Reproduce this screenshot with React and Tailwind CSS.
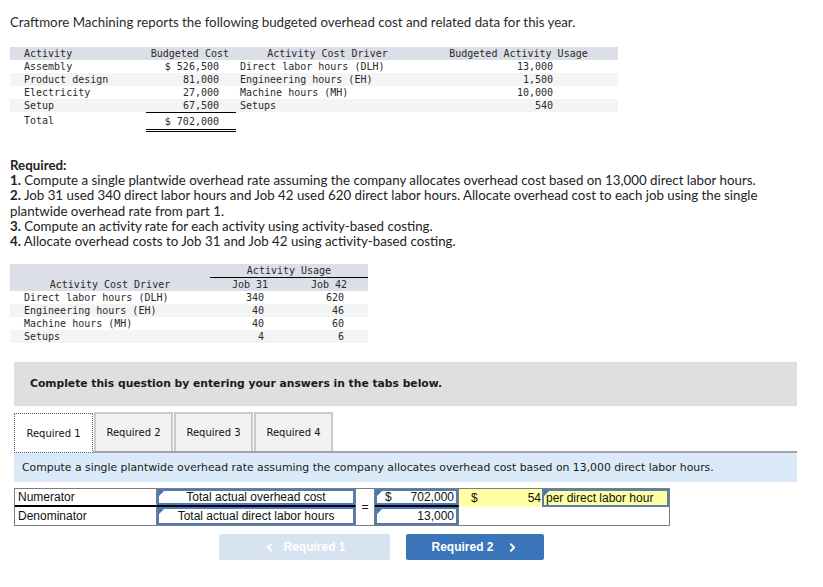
import React from 'react';
import { ChevronLeft, ChevronRight } from 'lucide-react';

const mono = "font-['DejaVu_Sans_Mono',monospace] text-[10px] leading-[13px] text-[#2a2a2a]";

const budget = [
  { activity: 'Assembly', cost: '$ 526,500', driver: 'Direct labor hours (DLH)', usage: '13,000' },
  { activity: 'Product design', cost: '81,000', driver: 'Engineering hours (EH)', usage: '1,500' },
  { activity: 'Electricity', cost: '27,000', driver: 'Machine hours (MH)', usage: '10,000' },
  { activity: 'Setup', cost: '67,500', driver: 'Setups', usage: '540' },
];

const usage = [
  { driver: 'Direct labor hours (DLH)', j31: '340', j42: '620' },
  { driver: 'Engineering hours (EH)', j31: '40', j42: '46' },
  { driver: 'Machine hours (MH)', j31: '40', j42: '60' },
  { driver: 'Setups', j31: '4', j42: '6' },
];

function BudgetTable() {
  return (
    <div className={`ml-[10px] w-[608px] ${mono}`}>
      <div className="grid grid-cols-[130px_96px_183px_199px] bg-[#dcdfe7]">
        <div className="pl-[14px]">Activity</div>
        <div className="text-right pr-[7px]">Budgeted Cost</div>
        <div className="text-center">Activity Cost Driver</div>
        <div className="text-center">Budgeted Activity Usage</div>
      </div>
      {budget.map((r, i) => (
        <div key={r.activity} className={`grid grid-cols-[130px_96px_183px_199px] ${i % 2 ? 'bg-[#f4f4f4]' : 'bg-white'}`}>
          <div className="pl-[14px]">{r.activity}</div>
          <div className="text-right pr-[17px]">{r.cost}</div>
          <div className="pl-[4px]">{r.driver}</div>
          <div className="text-right pr-[65px]">{r.usage}</div>
        </div>
      ))}
      <div className="grid grid-cols-[130px_96px_183px_199px]">
        <div className="pl-[14px] pt-[2px]">Total</div>
        <div className="ml-[6px] border-t border-black pt-[2px] pb-[1px] border-b-[3px] border-b-black border-double text-right pr-[17px]">$ 702,000</div>
        <div />
        <div />
      </div>
    </div>
  );
}

function UsageTable() {
  return (
    <div className={`ml-[10px] w-[358px] ${mono}`}>
      <div className="bg-[#dcdfe7] grid grid-cols-[200px_158px]">
        <div />
        <div className="text-center border-b border-black">Activity Usage</div>
        <div className="text-center">Activity Cost Driver</div>
        <div className="grid grid-cols-[80px_78px]">
          <div className="text-center">Job 31</div>
          <div className="text-center">Job 42</div>
        </div>
      </div>
      {usage.map((r, i) => (
        <div key={r.driver} className={`grid grid-cols-[200px_80px_78px] ${i % 2 ? 'bg-[#f4f4f4]' : 'bg-white'}`}>
          <div className="pl-[14px]">{r.driver}</div>
          <div className="text-right pr-[26px]">{r.j31}</div>
          <div className="text-right pr-[24px]">{r.j42}</div>
        </div>
      ))}
    </div>
  );
}

function Flag() {
  return <span className="absolute left-0 top-0 w-0 h-0 border-t-[5px] border-t-[#3f73b6] border-r-[5px] border-r-transparent" />;
}

function InputBox({ children, className = '' }) {
  return (
    <div className={`relative h-full border-2 border-[#4f7cb8] flex items-center ${className}`}>
      <Flag />
      {children}
    </div>
  );
}

function AnswerTable() {
  const cell = "font-['Liberation_Sans',Arial,sans-serif] text-[12px] text-[#111]";
  return (
    <div className={`ml-[14px] w-[656px] border border-[#7d7d7d] grid grid-cols-[142px_199px_19px_84px_83px_127px] grid-rows-[18px_18px] ${cell}`}>
      <div className="border-r border-[#7d7d7d] border-b-2 border-b-black px-[3px] flex items-center">Numerator</div>
      <div className="border-r border-[#7d7d7d] border-b-2 border-b-black">
        <InputBox className="justify-center bg-white">Total actual overhead cost</InputBox>
      </div>
      <div className="row-span-2 border-r border-[#7d7d7d] flex items-center justify-center">=</div>
      <div className="border-r border-[#7d7d7d] border-b-2 border-b-black">
        <InputBox className="justify-between pl-[8px] pr-[2px]">
          <span>$</span>
          <span>702,000</span>
        </InputBox>
      </div>
      <div className="bg-[#ffffa6] flex items-center justify-between pl-[12px] pr-[1px]">
        <span>$</span>
        <span>54</span>
      </div>
      <div className="bg-[#ffffa6]">
        <InputBox className="px-[2px] border-[#5a7fae]">per direct labor hour</InputBox>
      </div>
      <div className="border-r border-[#7d7d7d] px-[3px] flex items-center">Denominator</div>
      <div className="border-r border-[#7d7d7d]">
        <InputBox className="justify-center bg-white">Total actual direct labor hours</InputBox>
      </div>
      <div className="border-r border-[#7d7d7d]">
        <InputBox className="justify-end pr-[2px]">13,000</InputBox>
      </div>
      <div className="col-span-2 bg-white" />
    </div>
  );
}

export default function App() {
  const tabs = ['Required 1', 'Required 2', 'Required 3', 'Required 4'];
  return (
    <div className="w-[823px] h-[587px] bg-white overflow-hidden font-['Lato','Open_Sans',sans-serif] text-[#2b2b2b]">
      <p className="pl-[10px] pt-[14px] text-[13.3px] leading-[16px]">
        Craftmore Machining reports the following budgeted overhead cost and related data for this year.
      </p>

      <div className="mt-[17px]">
        <BudgetTable />
      </div>

      <div className="mt-[26px] pl-[10px] text-[13.3px] leading-[15.2px] text-[#222] whitespace-nowrap">
        <div className="font-bold">Required:</div>
        <div><b>1.</b> Compute a single plantwide overhead rate assuming the company allocates overhead cost based on 13,000 direct labor hours.</div>
        <div><b>2.</b> Job 31 used 340 direct labor hours and Job 42 used 620 direct labor hours. Allocate overhead cost to each job using the single</div>
        <div>plantwide overhead rate from part 1.</div>
        <div><b>3.</b> Compute an activity rate for each activity using activity-based costing.</div>
        <div><b>4.</b> Allocate overhead costs to Job 31 and Job 42 using activity-based costing.</div>
      </div>

      <div className="mt-[15px]">
        <UsageTable />
      </div>

      <div className="mt-[19px] ml-[14px] w-[783px] h-[44px] bg-[#dfdfdf] flex items-center pl-[16px] font-['DejaVu_Sans',Verdana,sans-serif] font-bold text-[10.75px] text-[#1a1a1a]">
        Complete this question by entering your answers in the tabs below.
      </div>

      <div className="mt-[6px] ml-[14px] w-[783px] flex items-end border-b-2 border-[#a3a3a3] font-['DejaVu_Sans',Verdana,sans-serif] text-[10px] text-[#111]">
        {tabs.map((t, i) => (
          <div
            key={t}
            className={
              i === 0
                ? 'w-[79px] h-[40px] -mb-[2px] bg-white border border-dotted border-[#4a5f80] flex items-center justify-center'
                : 'w-[79px] h-[39px] ml-[1px] bg-[#f2f2f2] border-2 border-[#c9c9c9] border-b-0 flex items-center justify-center'
            }
          >
            {t}
          </div>
        ))}
      </div>

      <div className="ml-[14px] w-[783px] h-[29px] bg-[#dbeaf8] flex items-center pl-[8px] font-['DejaVu_Sans',Verdana,sans-serif] text-[10.85px] text-[#1a1a1a]">
        Compute a single plantwide overhead rate assuming the company allocates overhead cost based on 13,000 direct labor hours.
      </div>

      <div className="mt-[6px]">
        <AnswerTable />
      </div>

      <div className="mt-[8px] flex gap-[16px] pl-[219px] font-['Liberation_Sans',Arial,sans-serif] font-bold text-[12px] text-white">
        <div className="w-[171px] h-[26px] rounded-[2px] bg-[#d7e3f1] flex items-center justify-center gap-[7px]">
          <ChevronLeft size={13} strokeWidth={3.5} />
          <span>Required 1</span>
        </div>
        <div className="w-[138px] h-[26px] rounded-[2px] bg-[#3a75b9] flex items-center justify-center gap-[12px]">
          <span>Required 2</span>
          <ChevronRight size={13} strokeWidth={3.5} />
        </div>
      </div>
    </div>
  );
}
